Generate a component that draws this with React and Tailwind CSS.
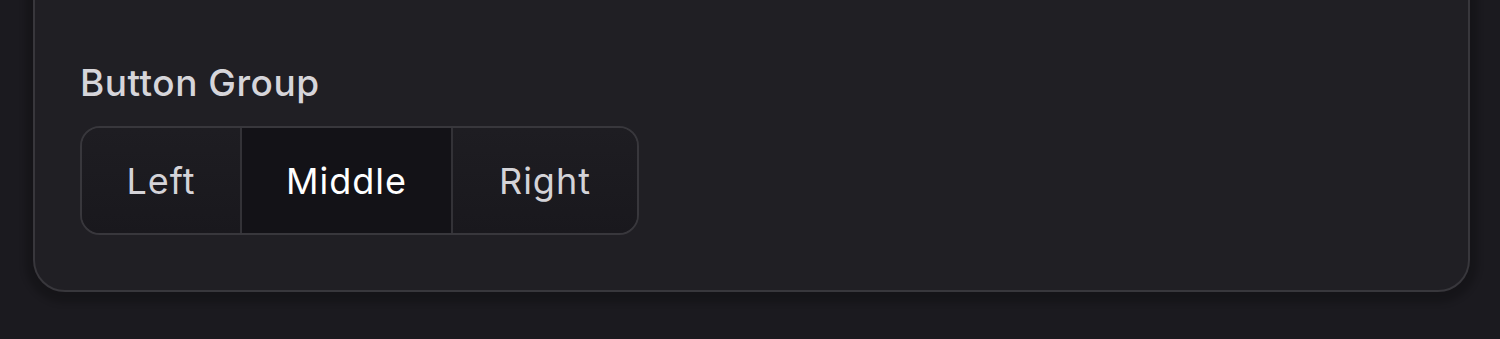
import React, { useState } from 'react';

const buttons = [
  { label: 'Left', width: 'w-[160px]' },
  { label: 'Middle', width: 'w-[211px]' },
  { label: 'Right', width: 'w-[184px]' },
];

const App = () => {
  const [active, setActive] = useState('Middle');

  return (
    <div
      className="h-[339px] w-[1500px] overflow-hidden bg-[#1b1a1f]"
      style={{ fontFamily: 'Inter, "Noto Sans", sans-serif' }}
    >
      <div className="ml-[33px] mr-[30px] -mt-[40px] rounded-[32px] border-2 border-[#38373c] bg-[#201f24] pt-[99px] pb-[55px] pl-[45px] shadow-[0_3px_6px_8px_rgba(0,0,0,0.2)]">
        <h3 className="mb-[21px] text-[37px] font-medium leading-[44px] tracking-[0.5px] text-[#d6d5da]">
          Button Group
        </h3>

        {/* Button Group */}
        <div className="flex h-[109px] w-fit overflow-hidden rounded-[20px] border-2 border-[#38373c]">
          {buttons.map((btn, i) => (
            <button
              key={btn.label}
              onClick={() => setActive(btn.label)}
              className={`${btn.width} flex items-center justify-center text-[36px] leading-none tracking-[1px] ${
                i < buttons.length - 1 ? 'border-r-2 border-[#333237]' : ''
              } ${
                active === btn.label
                  ? 'bg-[#131217] text-white'
                  : 'bg-gradient-to-b from-[#1e1d22] to-[#19181d] text-[#d4d3d8]'
              }`}
            >
              {btn.label}
            </button>
          ))}
        </div>
      </div>
    </div>
  );
};

export default App;
